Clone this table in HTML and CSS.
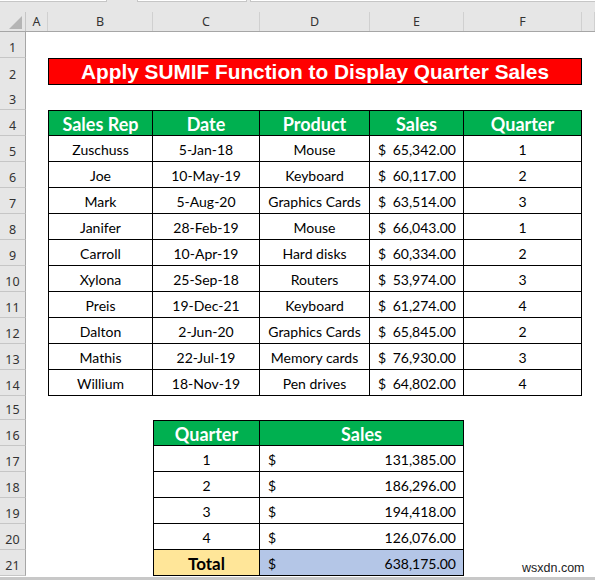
FILE: index.html
```html
<!DOCTYPE html>
<html lang="en">
<head>
  <meta charset="UTF-8">
  <title>Apply SUMIF Function to Display Quarter Sales</title>
  <link rel="stylesheet" href="styles.css">
</head>
<body>
  <div class="sheet">
    <div class="topbar">
      <div class="box box1"></div>
      <div class="box box2"></div>
      <div class="box box3"></div>
    </div>

    <div class="row colhead">
      <div class="corner"><span class="tri"></span></div>
      <div class="col">A</div>
      <div class="col">B</div>
      <div class="col">C</div>
      <div class="col">D</div>
      <div class="col">E</div>
      <div class="col">F</div>
      <div class="col"></div>
    </div>

    <div class="row"><div class="num">1</div></div>

    <div class="row">
      <div class="num">2</div>
      <div></div>
      <div class="title">Apply SUMIF Function to Display Quarter Sales</div>
    </div>

    <div class="row"><div class="num">3</div></div>

    <div class="row">
      <div class="num">4</div>
      <div></div>
      <div class="c head first">Sales Rep</div>
      <div class="c head">Date</div>
      <div class="c head">Product</div>
      <div class="c head">Sales</div>
      <div class="c head">Quarter</div>
    </div>

    <div class="row">
      <div class="num">5</div><div></div>
      <div class="c first">Zuschuss</div><div class="c">5-Jan-18</div><div class="c">Mouse</div>
      <div class="c money"><span>$</span><span>65,342.00</span></div><div class="c">1</div>
    </div>
    <div class="row">
      <div class="num">6</div><div></div>
      <div class="c first">Joe</div><div class="c">10-May-19</div><div class="c">Keyboard</div>
      <div class="c money"><span>$</span><span>60,117.00</span></div><div class="c">2</div>
    </div>
    <div class="row">
      <div class="num">7</div><div></div>
      <div class="c first">Mark</div><div class="c">5-Aug-20</div><div class="c">Graphics Cards</div>
      <div class="c money"><span>$</span><span>63,514.00</span></div><div class="c">3</div>
    </div>
    <div class="row">
      <div class="num">8</div><div></div>
      <div class="c first">Janifer</div><div class="c">28-Feb-19</div><div class="c">Mouse</div>
      <div class="c money"><span>$</span><span>66,043.00</span></div><div class="c">1</div>
    </div>
    <div class="row">
      <div class="num">9</div><div></div>
      <div class="c first">Carroll</div><div class="c">10-Apr-19</div><div class="c">Hard disks</div>
      <div class="c money"><span>$</span><span>60,334.00</span></div><div class="c">2</div>
    </div>
    <div class="row">
      <div class="num">10</div><div></div>
      <div class="c first">Xylona</div><div class="c">25-Sep-18</div><div class="c">Routers</div>
      <div class="c money"><span>$</span><span>53,974.00</span></div><div class="c">3</div>
    </div>
    <div class="row">
      <div class="num">11</div><div></div>
      <div class="c first">Preis</div><div class="c">19-Dec-21</div><div class="c">Keyboard</div>
      <div class="c money"><span>$</span><span>61,274.00</span></div><div class="c">4</div>
    </div>
    <div class="row">
      <div class="num">12</div><div></div>
      <div class="c first">Dalton</div><div class="c">2-Jun-20</div><div class="c">Graphics Cards</div>
      <div class="c money"><span>$</span><span>65,845.00</span></div><div class="c">2</div>
    </div>
    <div class="row">
      <div class="num">13</div><div></div>
      <div class="c first">Mathis</div><div class="c">22-Jul-19</div><div class="c">Memory cards</div>
      <div class="c money"><span>$</span><span>76,930.00</span></div><div class="c">3</div>
    </div>
    <div class="row">
      <div class="num">14</div><div></div>
      <div class="c first">Willium</div><div class="c">18-Nov-19</div><div class="c">Pen drives</div>
      <div class="c money"><span>$</span><span>64,802.00</span></div><div class="c">4</div>
    </div>

    <div class="row short"><div class="num">15</div></div>

    <div class="row">
      <div class="num">16</div><div></div><div></div>
      <div class="c head first">Quarter</div>
      <div class="c head wide">Sales</div>
    </div>
    <div class="row">
      <div class="num">17</div><div></div><div></div>
      <div class="c first">1</div>
      <div class="c money wide"><span>$</span><span>131,385.00</span></div>
    </div>
    <div class="row">
      <div class="num">18</div><div></div><div></div>
      <div class="c first">2</div>
      <div class="c money wide"><span>$</span><span>186,296.00</span></div>
    </div>
    <div class="row">
      <div class="num">19</div><div></div><div></div>
      <div class="c first">3</div>
      <div class="c money wide"><span>$</span><span>194,418.00</span></div>
    </div>
    <div class="row">
      <div class="num">20</div><div></div><div></div>
      <div class="c first">4</div>
      <div class="c money wide"><span>$</span><span>126,076.00</span></div>
    </div>
    <div class="row">
      <div class="num">21</div><div></div><div></div>
      <div class="c first total">Total</div>
      <div class="c money wide sum"><span>$</span><span>638,175.00</span></div>
    </div>

    <div class="bottombar"></div>
    <div class="mark">wsxdn.com</div>
  </div>
</body>
</html>
```

FILE: styles.css
```css
body {
  margin: 0;
  background: #fff;
  font-family: Lato, "Liberation Sans", sans-serif;
}
.sheet {
  position: relative;
  width: 595px;
  height: 580px;
  overflow: hidden;
}
.topbar {
  height: 12px;
  background: #e6e6e6;
  position: relative;
}
.box {
  position: absolute;
  top: 0;
  height: 1px;
  background: #fff;
  border: 1px solid #c6c6c6;
  border-top: 0;
}
.box1 { left: -1px; width: 106px; }
.box2 { left: 137px; width: 108px; }
.box3 { left: 250px; width: 350px; }

.row {
  display: grid;
  grid-template-columns: 26px 22px 105px 107px 110px 94px 118px 1fr;
  height: 26px;
}
.row.short {
  height: 24px;
}

/* headers */
.colhead {
  height: 20px;
  background: #e6e6e6;
  border-bottom: 1px solid #a6a6a6;
  box-sizing: border-box;
}
.corner {
  border-right: 1px solid #c6c6c6;
  display: flex;
  align-items: flex-end;
  justify-content: flex-end;
  padding: 0 3px 2px 0;
}
.tri {
  width: 0;
  height: 0;
  border-left: 13px solid transparent;
  border-bottom: 13px solid #b5b5b5;
}
.col, .num {
  font-family: "Noto Sans", "Liberation Sans", sans-serif;
  font-size: 12.5px;
  color: #333;
}
.col {
  border-right: 1px solid #d0d0d0;
  text-align: center;
  line-height: 19px;
}
.num {
  background: #e6e6e6;
  border-right: 1px solid #a6a6a6;
  border-bottom: 1px solid #c6c6c6;
  display: flex;
  align-items: flex-end;
  justify-content: center;
  padding-bottom: 1px;
  box-sizing: border-box;
}

/* cells */
.title {
  grid-column: span 5;
  background: #ff0000;
  border: 1px solid #000;
  color: #fff;
  font-family: "Liberation Sans", Arial, sans-serif;
  font-weight: bold;
  font-size: 20.8px;
  display: flex;
  align-items: center;
  justify-content: center;
  padding-top: 1px;
}
.c {
  border-right: 1px solid #000;
  border-bottom: 1px solid #000;
  font-size: 14px;
  color: #000;
  display: flex;
  align-items: center;
  justify-content: center;
  padding-top: 1px;
  white-space: nowrap;
}
.c.first {
  border-left: 1px solid #000;
}
.c.head {
  border-top: 1px solid #000;
  background: #00b050;
  color: #fff;
  font-weight: bold;
  font-size: 18px;
}
.c.wide {
  grid-column: span 2;
}
.money {
  justify-content: space-between;
  padding: 1px 7px 0 8px;
}
.total {
  background: #ffe699;
  font-weight: bold;
  font-size: 17px;
}
.sum {
  background: #b4c6e7;
}

.bottombar {
  margin-top: 1px;
  height: 3px;
  background: #c8c8c8;
}
.mark {
  position: absolute;
  left: 522px;
  top: 561px;
  font-family: "Liberation Sans", Arial, sans-serif;
  font-size: 12.5px;
  color: #222;
}
```
